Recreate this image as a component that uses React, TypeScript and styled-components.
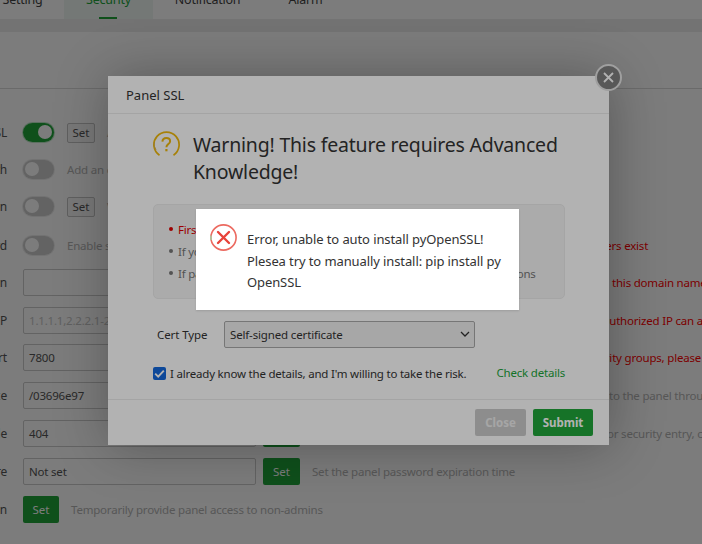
import React from 'react';
import styled, { createGlobalStyle } from 'styled-components';

const Global = createGlobalStyle`
  html, body { margin: 0; padding: 0; width: 702px; height: 544px; overflow: hidden; background: #fff; }
  body { font-family: "Noto Sans", "Open Sans", Arial, sans-serif; }
  * { box-sizing: border-box; }
`;

const Stage = styled.div`
  position: relative;
  width: 702px;
  height: 544px;
  overflow: hidden;
  background: #fff;
`;
const Page = styled.div`
  display: flex;
  flex-direction: column;
  width: 702px;
  height: 544px;
  overflow: hidden;
`;
const Tabs = styled.div`
  display: flex;
  height: 19px;
  flex: none;
  overflow: hidden;
  align-items: flex-start;
`;
const Tab = styled.div<{ $active?: boolean; $w: number; $ml?: number }>`
  position: relative;
  width: ${p => p.$w}px;
  height: 19px;
  flex: none;
  margin-left: ${p => p.$ml ?? 0}px;
  font-size: 12.5px;
  letter-spacing: -0.25px;
  line-height: 18px;
  text-align: center;
  color: ${p => (p.$active ? '#20a53a' : '#444')};
  background: ${p => (p.$active ? '#f0f8f2' : 'transparent')};
  & > span { display: block; margin-top: -9px; }
  ${p => p.$active ? `&::after { content: ''; position: absolute; left: 35px; bottom: 0; width: 18px; height: 2px; background: #20a53a; }` : ''}
`;
const Band = styled.div`
  height: 13px;
  flex: none;
  background: #ececec;
`;
const Gap = styled.div`
  height: 57px;
  flex: none;
  border-bottom: 1px solid #dcdcdc;
`;
const Form = styled.div`
  display: flex;
  flex-direction: column;
  padding-top: 23.5px;
  margin-left: -100px;
`;
const Row = styled.div<{ $h: number }>`
  display: flex;
  align-items: center;
  height: ${p => p.$h}px;
  flex: none;
`;
const Label = styled.div`
  width: 107px;
  flex: none;
  display: flex;
  justify-content: flex-end;
  margin-right: 16px;
  white-space: nowrap;
  font-size: 12px;
  letter-spacing: -0.2px;
  color: #555;
`;
const Toggle = styled.div<{ $on?: boolean }>`
  position: relative;
  width: 31px;
  height: 19px;
  flex: none;
  border-radius: 10px;
  background: ${p => (p.$on ? '#20a53a' : '#ccc')};
  box-shadow: 0 0 0 1px ${p => (p.$on ? 'rgba(32,165,58,.3)' : 'rgba(0,0,0,.08)')};
  &::after {
    content: '';
    position: absolute;
    top: 2px;
    left: ${p => (p.$on ? '15px' : '2px')};
    width: 14px;
    height: 14px;
    border-radius: 50%;
    background: #fff;
  }
`;
const GhostSet = styled.button`
  width: 28px;
  height: 20px;
  padding: 0;
  margin-left: 13px;
  flex: none;
  font: inherit;
  font-size: 11.5px;
  color: #555;
  background: #f6f6f6;
  border: 1px solid #c4c4c4;
  border-radius: 2px;
`;
const Hint = styled.span<{ $gap?: number }>`
  margin-left: ${p => p.$gap ?? 12}px;
  font-size: 11.5px;
  letter-spacing: -0.2px;
  white-space: nowrap;
  color: #b4b4b4;
`;
const Lead = styled.span<{ $w: number }>`
  display: inline-block;
  width: ${p => p.$w}px;
  overflow: hidden;
  vertical-align: bottom;
`;
const Red = styled.span`
  color: #ff0000;
`;
const Field = styled.div<{ $dim?: boolean }>`
  width: 233px;
  height: 27px;
  flex: none;
  padding-left: 5px;
  border: 1px solid #ccc;
  border-radius: 2px;
  font-size: 11.5px;
  letter-spacing: -0.2px;
  line-height: 25px;
  color: ${p => (p.$dim ? '#c6c6c6' : '#555')};
`;
const SetBtn = styled.button<{ $first?: boolean }>`
  width: ${p => (p.$first ? 36 : 37)}px;
  height: 27px;
  flex: none;
  padding: 0;
  margin-left: ${p => (p.$first ? 0 : 7)}px;
  font: inherit;
  font-size: 11.5px;
  color: #fff;
  background: #20a53a;
  border: none;
  border-radius: 2px;
`;

const Shade = styled.div`
  position: absolute;
  inset: 0;
  background: rgba(0, 0, 0, 0.3);
`;
const Modal = styled.div`
  position: absolute;
  left: 108px;
  top: 76px;
  width: 501px;
  height: 369px;
  display: flex;
  flex-direction: column;
  background: #fff;
  box-shadow: 1px 1px 50px rgba(0, 0, 0, 0.3);
`;
const ModalHead = styled.div`
  height: 38px;
  flex: none;
  padding-left: 18px;
  font-size: 13px;
  line-height: 39px;
  color: #333;
  border-bottom: 1px solid #ebebeb;
`;
const ModalBody = styled.div`
  flex: 1;
  display: flex;
  flex-direction: column;
  padding: 0 44px 0 45px;
`;
const Warn = styled.div`
  display: flex;
  height: 90px;
  padding-top: 17px;
  flex: none;
`;
const QuestionSlot = styled.div`
  flex: none;
`;
const WarnText = styled.h1`
  margin: 0 0 0 12px;
  font-size: 19.5px;
  font-weight: 400;
  line-height: 27px;
  color: #333;
  letter-spacing: -0.2px;
`;
const Notice = styled.ul`
  list-style: none;
  margin: 0;
  height: 95px;
  flex: none;
  padding: 13px 0 0 15px;
  background: #f5f5f5;
  border: 1px solid #ececec;
  border-radius: 5px;
`;
const NoticeItem = styled.li<{ $red?: boolean }>`
  display: flex;
  align-items: center;
  height: 22px;
  font-size: 11.5px;
  white-space: nowrap;
  letter-spacing: -0.22px;
  color: ${p => (p.$red ? '#e00000' : '#777')};
  &::before {
    content: '';
    width: 4px;
    height: 4px;
    margin-right: 5px;
    border-radius: 50%;
    background: currentColor;
    flex: none;
  }
`;
const CertRow = styled.div`
  display: flex;
  align-items: center;
  margin-top: 22px;
  height: 27px;
`;
const CertLabel = styled.label`
  width: 71px;
  padding-left: 4px;
  flex: none;
  font-size: 11.5px;
  letter-spacing: -0.1px;
  color: #333;
`;
const Select = styled.div`
  position: relative;
  width: 251px;
  height: 27px;
  padding-left: 5px;
  font-size: 11.5px;
  letter-spacing: -0.15px;
  line-height: 25px;
  color: #333;
  background: #f0f0f0;
  border: 1px solid #aaa;
  border-radius: 2px;
  & > svg { position: absolute; right: 4px; top: 8px; }
`;
const AgreeRow = styled.div`
  display: flex;
  align-items: center;
  margin-top: 18px;
  height: 14px;
`;
const Check = styled.span`
  width: 13px;
  height: 13px;
  flex: none;
  display: flex;
  align-items: center;
  justify-content: center;
  background: #1367dc;
  border-radius: 2px;
`;
const AgreeText = styled.span`
  margin-left: 4px;
  font-size: 11.5px;
  color: #333;
  white-space: nowrap;
  letter-spacing: -0.21px;
`;
const DetailLink = styled.a`
  margin-left: auto;
  margin-top: -2px;
  font-size: 11.5px;
  color: #20a53a;
  white-space: nowrap;
  letter-spacing: -0.2px;
`;
const ModalFoot = styled.div`
  height: 46px;
  flex: none;
  display: flex;
  justify-content: flex-end;
  gap: 7px;
  padding: 9px 16px 0 0;
  border-top: 1px solid #ebebeb;
  background: #fff;
`;
const FootBtn = styled.button<{ $primary?: boolean }>`
  width: ${p => (p.$primary ? 60 : 51)}px;
  height: 27px;
  padding: 0;
  font: inherit;
  font-size: 11.5px;
  font-weight: 700;
  color: ${p => (p.$primary ? '#fff' : '#eee')};
  background: ${p => (p.$primary ? '#20a53a' : '#cbcbcb')};
  border: none;
  border-radius: 2px;
`;
const CloseCircle = styled.div`
  position: absolute;
  left: 595px;
  top: 64px;
  width: 27px;
  height: 27px;
  display: flex;
  align-items: center;
  justify-content: center;
  border-radius: 50%;
  background: #7f7f7f;
  border: 2px solid #e4e4e4;
`;
const Toast = styled.div`
  position: absolute;
  left: 196px;
  top: 209px;
  width: 323px;
  height: 101px;
  display: flex;
  padding: 15px 0 0 14px;
  background: #fff;
  box-shadow: 0 1px 2px rgba(0, 0, 0, 0.12);
`;
const ToastText = styled.div`
  margin-left: 10px;
  padding-top: 5px;
  width: 270px;
  font-size: 13px;
  letter-spacing: -0.1px;
  line-height: 21.5px;
  color: #333;
`;

const Question = () => (
  <svg width="28" height="27" viewBox="0 0 28 27" fill="none" style={{ display: 'block' }}>
    <path d="M6.5 24.2A12.6 12.6 0 1 1 20.5 24.2" stroke="#f0b90c" strokeWidth="1.7" />
    <path d="M1 11.5A12.6 12.6 0 0 0 3 19" stroke="#d9b24a" strokeWidth="1" />
    <path d="M9.4 10.6c.2-2.4 1.8-3.6 3.9-3.6 2.2 0 3.8 1.3 3.8 3.2 0 1.6-.9 2.4-2.1 3.2-1.1.8-1.6 1.4-1.6 2.9" stroke="#f0b90c" strokeWidth="2" />
    <rect x="12.3" y="18" width="2.2" height="2.3" fill="#f0b90c" />
  </svg>
);
const ErrorIcon = () => (
  <svg width="27" height="27" viewBox="0 0 27 27" fill="none" style={{ flex: 'none' }}>
    <circle cx="13.5" cy="13.5" r="12.6" stroke="#ec6a60" strokeWidth="1.6" />
    <path d="M1 11.5A12.6 12.6 0 0 0 1.2 16" stroke="#9fd3a8" strokeWidth="1.4" />
    <path d="M8 8l11 11M19 8L8 19" stroke="#e8433a" strokeWidth="2.4" strokeLinecap="round" />
  </svg>
);

export default function App() {
  return (
    <Stage>
      <Global />
      <Page>
        <Tabs>
          <Tab $w={45}><span>Setting</span></Tab>
          <Tab $active $w={89} $ml={19}><span>Security</span></Tab>
          <Tab $w={109}><span>Notification</span></Tab>
          <Tab $w={87}><span>Alarm</span></Tab>
        </Tabs>
        <Band />
        <Gap />
        <Form>
          <Row $h={40}>
            <Label>Panel SSL</Label>
            <Toggle $on />
            <GhostSet>Set</GhostSet>
            <Hint>Access the panel over HTTPS</Hint>
          </Row>
          <Row $h={34}>
            <Label>BasicAuth</Label>
            <Toggle />
            <Hint $gap={13}>Add an extra layer of authentication</Hint>
          </Row>
          <Row $h={40}>
            <Label>Google authentication</Label>
            <Toggle />
            <GhostSet>Set</GhostSet>
            <Hint>Verify login with a code</Hint>
          </Row>
          <Row $h={37}>
            <Label>Forced password</Label>
            <Toggle />
            <Hint $gap={13}><Lead $w={526}>Enable strong passwords for panel logins</Lead><Red>users exist</Red></Hint>
          </Row>
          <Row $h={37.8}>
            <Label>Domain</Label>
            <Field />
            <SetBtn>Set</SetBtn>
            <Hint><Lead $w={300}>Bind a domain to the panel</Lead><Red>this domain name can access</Red></Hint>
          </Row>
          <Row $h={37.8}>
            <Label>Authorized IP</Label>
            <Field $dim>1.1.1.1,2.2.2.1-2.2.2.2</Field>
            <SetBtn>Set</SetBtn>
            <Hint><Lead $w={291}>Restrict panel access by IP</Lead><Red>authorized IP can access</Red></Hint>
          </Row>
          <Row $h={37.8}>
            <Label>Panel port</Label>
            <Field>7800</Field>
            <SetBtn>Set</SetBtn>
            <Hint><Lead $w={269}>Change the panel port</Lead><Red>security groups, please allow</Red></Hint>
          </Row>
          <Row $h={37.8}>
            <Label>Security entrance</Label>
            <Field>/03696e97</Field>
            <SetBtn>Set</SetBtn>
            <Hint><Lead $w={297}>Set the panel entrance</Lead>to the panel through</Hint>
          </Row>
          <Row $h={37.8}>
            <Label>Response code</Label>
            <Field>404</Field>
            <SetBtn>Set</SetBtn>
            <Hint><Lead $w={295}>Set the response code</Lead>or security entry, can be set</Hint>
          </Row>
          <Row $h={37.8}>
            <Label>Password expire</Label>
            <Field>Not set</Field>
            <SetBtn>Set</SetBtn>
            <Hint>Set the panel password expiration time</Hint>
          </Row>
          <Row $h={37.8}>
            <Label>Temporary login</Label>
            <SetBtn $first>Set</SetBtn>
            <Hint>Temporarily provide panel access to non-admins</Hint>
          </Row>
        </Form>
      </Page>
      <Shade />
      <Modal>
        <ModalHead>Panel SSL</ModalHead>
        <ModalBody>
          <Warn>
            <QuestionSlot><Question /></QuestionSlot>
            <WarnText>Warning! This feature requires Advanced Knowledge!</WarnText>
          </Warn>
          <Notice>
            <NoticeItem $red>First, make sure you understand this</NoticeItem>
            <NoticeItem>If you do not have a certificate, use self-signed</NoticeItem>
            <NoticeItem>If panel is not accessible, you can click the link below to find solutions</NoticeItem>
          </Notice>
          <CertRow>
            <CertLabel>Cert Type</CertLabel>
            <Select>
              Self-signed certificate
              <svg width="10" height="8" viewBox="0 0 10 8" fill="none">
                <path d="M1 2l4 4 4-4" stroke="#333" strokeWidth="1.3" />
              </svg>
            </Select>
          </CertRow>
          <AgreeRow>
            <Check>
              <svg width="11" height="9" viewBox="0 0 11 9" fill="none">
                <path d="M1.2 4.6l3 3 5.6-6" stroke="#fff" strokeWidth="1.9" />
              </svg>
            </Check>
            <AgreeText>I already know the details, and I'm willing to take the risk.</AgreeText>
            <DetailLink>Check details</DetailLink>
          </AgreeRow>
        </ModalBody>
        <ModalFoot>
          <FootBtn>Close</FootBtn>
          <FootBtn $primary>Submit</FootBtn>
        </ModalFoot>
      </Modal>
      <CloseCircle>
        <svg width="13" height="13" viewBox="0 0 13 13" fill="none">
          <path d="M2 2l9 9M11 2l-9 9" stroke="#fff" strokeWidth="1.8" />
        </svg>
      </CloseCircle>
      <Shade />
      <Toast>
        <ErrorIcon />
        <ToastText>Error, unable to auto install pyOpenSSL! Plesea try to manually install: pip install py OpenSSL</ToastText>
      </Toast>
    </Stage>
  );
}
